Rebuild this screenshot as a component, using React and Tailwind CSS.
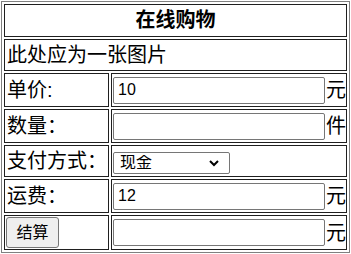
import React from 'react';

const font = { fontFamily: '"Liberation Sans", "Noto Sans CJK SC", sans-serif' };

function Field({ value, unit }) {
    return (
        <div className="flex items-center pl-px whitespace-nowrap">
            <input
                type="text"
                defaultValue={value}
                className="w-[212px] h-[27px] shrink-0 border border-[#767676] rounded-[2px] bg-white px-[4px] text-[16px] text-black outline-none"
            />
            <span className="ml-px text-[20px] leading-none">{unit}</span>
        </div>
    );
}

export default function App() {
    const cell = 'border border-[#1f1f1f] py-0 px-[2px] align-middle whitespace-nowrap overflow-visible';

    return (
        <div className="p-px bg-white text-black leading-tight" style={font}>
            <table className="table-fixed w-[349px] border-separate border-spacing-[2px] border border-[#808080]">
                <colgroup>
                    <col className="w-[105px]" />
                    <col />
                </colgroup>
                <tbody>
                    <tr>
                        <th colSpan={2} className={`${cell} h-[33px] text-[20px] font-bold text-center`}>在线购物</th>
                    </tr>
                    <tr>
                        <td colSpan={2} className={`${cell} h-[32px] text-[20px]`}>此处应为一张图片</td>
                    </tr>
                    <tr>
                        <td className={`${cell} h-[34px] text-[20px]`}>单价:</td>
                        <td className={`${cell} h-[34px] !px-0`}><Field value="10" unit="元" /></td>
                    </tr>
                    <tr>
                        <td className={`${cell} h-[34px] text-[20px]`}>数量：</td>
                        <td className={`${cell} h-[34px] !px-0`}><Field value="" unit="件" /></td>
                    </tr>
                    <tr>
                        <td className={`${cell} h-[32px] text-[20px]`}>支付方式：</td>
                        <td className={`${cell} h-[32px] !px-0`}>
                            <div className="pl-px pt-[4px]">
                                <div className="flex items-center w-[117px] h-[22px] border border-[#767676] rounded-[2px] bg-white">
                                    <select className="flex-1 min-w-0 appearance-none bg-transparent pl-[6px] text-[16px] leading-none outline-none">
                                        <option>现金</option>
                                        <option>信用卡</option>
                                    </select>
                                    <svg width="12" height="12" viewBox="0 0 12 12" className="mr-[9px] shrink-0">
                                        <path d="M2 4l4 4 4-4" fill="none" stroke="#000" strokeWidth="2" />
                                    </svg>
                                </div>
                            </div>
                        </td>
                    </tr>
                    <tr>
                        <td className={`${cell} h-[34px] text-[20px]`}>运费：</td>
                        <td className={`${cell} h-[34px] !px-0`}><Field value="12" unit="元" /></td>
                    </tr>
                    <tr>
                        <td className={`${cell} h-[35px] !px-px`}>
                            <button className="w-[53px] h-[31px] border border-[#767676] rounded-[3px] bg-[#efefef] text-[16px] leading-none">结算</button>
                        </td>
                        <td className={`${cell} h-[35px] !px-0`}><Field value="" unit="元" /></td>
                    </tr>
                </tbody>
            </table>
        </div>
    );
}
